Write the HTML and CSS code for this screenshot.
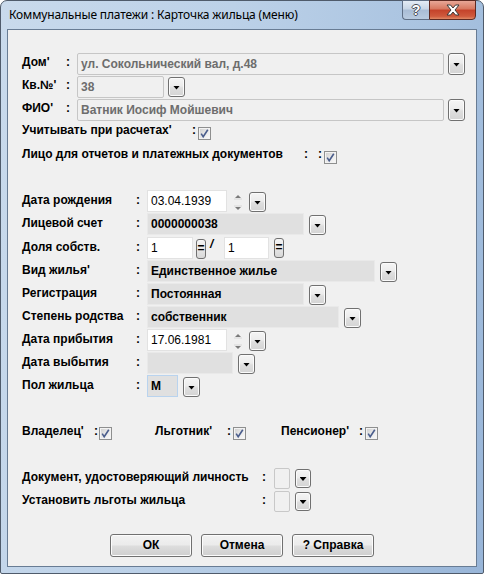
FILE: index.html
```html
<!DOCTYPE html>
<html lang="ru">
<head>
<meta charset="utf-8">
<title>Карточка жильца</title>
<link rel="stylesheet" href="styles.css">
</head>
<body>
<div class="window">
  <div class="titlebar">
    <div class="title">Коммунальные платежи : Карточка жильца (меню)</div>
    <div class="caption-btns">
      <div class="cap-help"><span>?</span></div>
      <div class="cap-close">
        <svg width="16" height="12" viewBox="0 0 16 12"><path d="M2 1 H5.5 L8 4 L10.5 1 H14 L10 6 L14 11 H10.5 L8 8 L5.5 11 H2 L6 6 Z" fill="#fff" stroke="#3a3a3a" stroke-width="1" stroke-linejoin="round"/></svg>
      </div>
    </div>
  </div>
  <div class="client">
    <div class="sec-top">
      <div class="row r1">
        <span class="lbl w-top">Дом'</span><span class="colon w-topc">:</span>
        <div class="field ro" style="width:367px">ул. Сокольнический вал, д.48</div>
        <div class="dd dd-top"></div>
      </div>
      <div class="row r2">
        <span class="lbl w-top">Кв.№'</span><span class="colon w-topc">:</span>
        <div class="field ro" style="width:87px">38</div>
        <div class="dd dd-kv"></div>
      </div>
      <div class="row r3">
        <span class="lbl w-top">ФИО'</span><span class="colon w-topc">:</span>
        <div class="field ro" style="width:367px">Ватник Иосиф Мойшевич</div>
        <div class="dd dd-top"></div>
      </div>
      <div class="row r4">
        <span class="lbl" style="width:170px">Учитывать при расчетах'</span><span class="colon w6">:</span>
        <div class="cb"><svg width="11" height="11" viewBox="0 0 11 11"><path d="M2.2 5.6 L4.2 8.8 L8.8 1.8" fill="none" stroke="#4a5d8c" stroke-width="1.6"/></svg></div>
      </div>
      <div class="row r5">
        <span class="lbl" style="width:282px">Лицо для отчетов и платежных документов</span><span class="colon" style="width:14px">:</span><span class="colon w6">:</span>
        <div class="cb"><svg width="11" height="11" viewBox="0 0 11 11"><path d="M2.2 5.6 L4.2 8.8 L8.8 1.8" fill="none" stroke="#4a5d8c" stroke-width="1.6"/></svg></div>
      </div>
    </div>

    <div class="sec-mid">
      <div class="mrow h23">
        <span class="lbl w-mid">Дата рождения</span><span class="colon w-midc">:</span>
        <div class="field white" style="width:80px">03.04.1939</div>
        <div class="spin"><svg width="12" height="22" viewBox="0 0 12 22"><path d="M3 8 L6 5 L9 8 Z" fill="#7a7a7a"/><path d="M3 17 L6 20 L9 17 Z" fill="#7a7a7a"/><path d="M2 9 H10" stroke="#d8d8d8"/><path d="M2 16 H10" stroke="#d8d8d8"/></svg></div>
        <div class="dd dd-mid" style="margin-left:5px"></div>
      </div>
      <div class="mrow h24">
        <span class="lbl w-mid">Лицевой счет</span><span class="colon w-midc">:</span>
        <div class="field grey bold" style="width:157px">0000000038</div>
        <div class="dd dd-mid"></div>
      </div>
      <div class="mrow h23">
        <span class="lbl w-mid">Доля собств.</span><span class="colon w-midc">:</span>
        <div class="field white" style="width:46px">1</div>
        <div class="eq">=</div>
        <span class="slash">/</span>
        <div class="field white" style="width:45px">1</div>
        <div class="eq eq2">=</div>
      </div>
      <div class="mrow h23">
        <span class="lbl w-mid">Вид жилья'</span><span class="colon w-midc">:</span>
        <div class="field grey bold" style="width:228px">Единственное жилье</div>
        <div class="dd dd-mid"></div>
      </div>
      <div class="mrow h23">
        <span class="lbl w-mid">Регистрация</span><span class="colon w-midc">:</span>
        <div class="field grey bold" style="width:157px">Постоянная</div>
        <div class="dd dd-mid"></div>
      </div>
      <div class="mrow h23">
        <span class="lbl w-mid">Степень родства</span><span class="colon w-midc">:</span>
        <div class="field grey bold" style="width:192px">собственник</div>
        <div class="dd dd-mid"></div>
      </div>
      <div class="mrow h23">
        <span class="lbl w-mid">Дата прибытия</span><span class="colon w-midc">:</span>
        <div class="field white" style="width:80px">17.06.1981</div>
        <div class="spin"><svg width="12" height="22" viewBox="0 0 12 22"><path d="M3 8 L6 5 L9 8 Z" fill="#7a7a7a"/><path d="M3 17 L6 20 L9 17 Z" fill="#7a7a7a"/><path d="M2 9 H10" stroke="#d8d8d8"/><path d="M2 16 H10" stroke="#d8d8d8"/></svg></div>
        <div class="dd dd-mid" style="margin-left:5px"></div>
      </div>
      <div class="mrow h23">
        <span class="lbl w-mid">Дата выбытия</span><span class="colon w-midc">:</span>
        <div class="field grey" style="width:86px"></div>
        <div class="dd dd-mid"></div>
      </div>
      <div class="mrow h23">
        <span class="lbl w-mid">Пол жильца</span><span class="colon w-midc">:</span>
        <div class="field grey bold focus" style="width:31px">М</div>
        <div class="dd dd-mid"></div>
      </div>
    </div>

    <div class="row flags">
      <span class="lbl" style="width:72px">Владелец'</span><span class="colon w5">:</span>
      <div class="cb"><svg width="11" height="11" viewBox="0 0 11 11"><path d="M2.2 5.6 L4.2 8.8 L8.8 1.8" fill="none" stroke="#4a5d8c" stroke-width="1.6"/></svg></div>
      <span class="lbl" style="width:72px;margin-left:43px">Льготник'</span><span class="colon w6">:</span>
      <div class="cb"><svg width="11" height="11" viewBox="0 0 11 11"><path d="M2.2 5.6 L4.2 8.8 L8.8 1.8" fill="none" stroke="#4a5d8c" stroke-width="1.6"/></svg></div>
      <span class="lbl" style="width:78px;margin-left:35px">Пенсионер'</span><span class="colon w6">:</span>
      <div class="cb"><svg width="11" height="11" viewBox="0 0 11 11"><path d="M2.2 5.6 L4.2 8.8 L8.8 1.8" fill="none" stroke="#4a5d8c" stroke-width="1.6"/></svg></div>
    </div>

    <div class="sec-bot">
      <div class="mrow h23">
        <span class="lbl" style="width:240px">Документ, удостоверяющий личность</span><span class="colon" style="width:12px">:</span>
        <div class="box"></div>
        <div class="dd dd-bot"></div>
      </div>
      <div class="mrow h23">
        <span class="lbl" style="width:240px">Установить льготы жильца</span><span class="colon" style="width:12px">:</span>
        <div class="box"></div>
        <div class="dd dd-bot"></div>
      </div>
    </div>

    <div class="buttons">
      <div class="btn">ОК</div>
      <div class="btn">Отмена</div>
      <div class="btn">? Справка</div>
    </div>
  </div>
</div>
</body>
</html>
```

FILE: styles.css
```css
* { box-sizing: border-box; }
html, body { margin: 0; padding: 0; }
body { width: 484px; height: 574px; overflow: hidden; background: #fff; }

.window {
  width: 484px;
  height: 574px;
  border: 1px solid #4f5b6b;
  border-radius: 7px 7px 2px 2px;
  padding: 0 6px 6px 6px;
  background: linear-gradient(100deg, #c9daec 0%, #bcd1e8 40%, #a9c3e0 75%, #98b5d8 100%);
  display: flex;
  flex-direction: column;
  font-family: "Liberation Sans", Arial, sans-serif;
}

.titlebar {
  height: 28px;
  display: flex;
  align-items: flex-start;
  flex: none;
}
.title {
  font-family: "Noto Sans", "Open Sans", sans-serif;
  font-size: 12px;
  color: #000;
  line-height: 28px;
  padding-left: 2px;
  letter-spacing: -0.15px;
}
.caption-btns {
  margin-left: auto;
  margin-top: -1px;
  margin-right: 1px;
  display: flex;
}
.cap-help {
  width: 27px;
  height: 20px;
  border: 1px solid #5f6f85;
  border-right: none;
  border-radius: 0 0 0 4px;
  background: linear-gradient(#e4ecf5 0%, #c8d6e6 45%, #a9bdd5 50%, #b9cbe0 100%);
  display: flex;
  align-items: center;
  justify-content: center;
}
.cap-help span {
  font-family: "Liberation Sans", sans-serif;
  font-weight: bold;
  font-size: 14px;
  color: #fff;
  line-height: 1;
  text-shadow: 1px 0 0 #4a4f58, -1px 0 0 #4a4f58, 0 1px 0 #4a4f58, 0 -1px 0 #4a4f58;
}
.cap-close {
  width: 47px;
  height: 20px;
  border: 1px solid #5e2a22;
  border-radius: 0 0 4px 0;
  background: linear-gradient(#e8a797 0%, #d7775f 45%, #c4422a 50%, #cf5a3d 85%, #e08a66 100%);
  display: flex;
  align-items: center;
  justify-content: center;
}
.cap-close svg { display: block; }

.client {
  width: 470px;
  height: 538px;
  border: 1px solid #687c94;
  background: #f0f0f0;
  padding-left: 14px;
  flex: none;
}

.row { display: flex; align-items: center; }
.mrow { display: flex; align-items: flex-start; }
.mrow > .lbl, .mrow > .colon { align-self: center; }

.lbl {
  font-size: 12px;
  font-weight: bold;
  color: #000;
  white-space: nowrap;
  flex: none;
  margin-bottom: 4px;
}
.colon {
  font-size: 12px;
  font-weight: bold;
  flex: none;
  margin-bottom: 4px;
}
.flags .lbl, .flags .colon { margin-bottom: 2px; }
.w-top { width: 44px; }
.w-topc { width: 11px; }
.w-mid { width: 114px; }
.w-midc { width: 11px; }
.w5 { width: 5px; }
.w6 { width: 6px; }

.sec-top { margin-top: 23px; }
.r1 { height: 22px; }
.r2 { height: 22px; margin-top: 1px; }
.r3 { height: 22px; margin-top: 1px; }
.r4 { height: 20px; margin-top: 1px; }
.r5 { height: 20px; margin-top: 4px; }

.field {
  height: 22px;
  flex: none;
  font-size: 12px;
  line-height: 20px;
  padding-left: 3px;
  white-space: nowrap;
  overflow: hidden;
  border: 1px solid #cfcfcf;
}
.field.ro {
  background: #f0f0f0;
  border-color: #c6c6c6;
  border-radius: 2px;
  color: #6d6d6d;
  font-weight: bold;
}
.field.white {
  background: #fff;
  border-color: #e2e2e2;
  color: #000;
}
.field.grey {
  background: #e0e0e0;
  border-color: #e9e9e9;
  color: #000;
}
.field.bold { font-weight: bold; }
.field.focus { border-color: #b9d3ee; }

.dd {
  flex: none;
  width: 17px;
  height: 20px;
  border: 1px solid #707070;
  border-radius: 3px;
  background: linear-gradient(#f5f5f5 0%, #ececec 45%, #dedede 55%, #d4d4d4 100%);
  display: flex;
  align-items: center;
  justify-content: center;
  box-shadow: inset 0 0 0 1px #fbfbfb;
}
.dd::after {
  content: "";
  width: 7px;
  height: 4px;
  margin-top: 1px;
  background: #000;
  clip-path: polygon(0 0, 100% 0, 50% 100%);
}
.dd-top { height: 22px; margin-left: 4px; }
.dd-kv { margin-left: 4px; }
.dd-mid { margin-left: 5px; margin-top: 2px; }
.dd-bot { width: 16px; height: 19px; margin-left: 5px; margin-top: 2px; }

.spin {
  flex: none;
  width: 12px;
  height: 22px;
  margin-left: 5px;
}
.spin svg { display: block; }

.eq {
  flex: none;
  width: 10px;
  height: 20px;
  margin-left: 3px;
  margin-top: 2px;
  border: 1px solid #707070;
  border-radius: 3px;
  background: linear-gradient(#f5f5f5, #d8d8d8);
  font-size: 12px;
  font-weight: bold;
  line-height: 17px;
  text-align: center;
}
.eq2 { margin-left: 5px; margin-top: 1px; }
.slash {
  flex: none;
  width: 18px;
  padding-left: 4px;
  font-size: 12px;
  font-weight: bold;
  font-style: italic;
  line-height: 14px;
}

.cb {
  flex: none;
  width: 13px;
  height: 13px;
  border: 1px solid #8e8f8f;
  background: linear-gradient(135deg, #cdcdcd 0%, #e8e8e8 50%, #fbfbfb 100%);
  box-shadow: inset 0 0 0 1px #f3f3f3;
  margin-top: 2px;
}
.cb svg { display: block; }

.sec-mid { margin-top: 24px; }
.h23 { height: 23px; }
.h24 { height: 24px; }

.flags { height: 20px; margin-top: 24px; }

.sec-bot { margin-top: 25px; }
.box {
  flex: none;
  width: 16px;
  height: 21px;
  margin-top: 1px;
  border: 1px solid #c8c8c8;
  border-radius: 2px;
  background: #f0f0f0;
}

.buttons {
  display: flex;
  gap: 9px;
  margin-top: 21px;
  margin-left: 88px;
}
.btn {
  width: 82px;
  height: 23px;
  border: 1px solid #707070;
  border-radius: 3px;
  background: linear-gradient(#f2f2f2 0%, #ebebeb 48%, #dddddd 52%, #cfcfcf 100%);
  box-shadow: inset 0 0 0 1px #fcfcfc;
  font-size: 12px;
  font-weight: bold;
  line-height: 21px;
  text-align: center;
  color: #000;
}
```
